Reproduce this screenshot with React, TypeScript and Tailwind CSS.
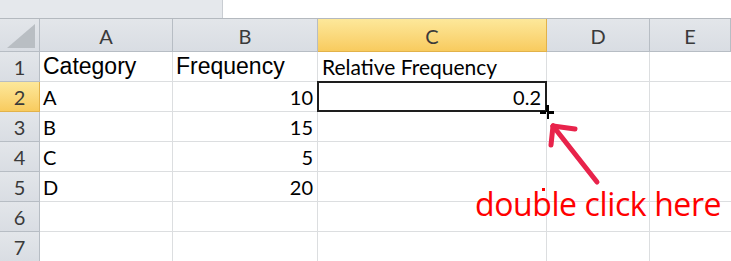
const cols = ["A", "B", "C", "D", "E"];
const widths = "grid-cols-[40px_133px_145px_229px_103px_81px]";

type Row = { n: number; a?: string; b?: string; c?: string };

const rows: Row[] = [
  { n: 1, a: "Category", b: "Frequency", c: "Relative Frequency" },
  { n: 2, a: "A", b: "10", c: "0.2" },
  { n: 3, a: "B", b: "15" },
  { n: 4, a: "C", b: "5" },
  { n: 5, a: "D", b: "20" },
  { n: 6 },
  { n: 7 },
];

const headGray = "bg-gradient-to-b from-[#e3e6ea] to-[#d9dde3] border-[#b7bdc4]";
const headOrange = "bg-gradient-to-b from-[#fde89a] to-[#f8cb5e] border-[#e2b24a]";

function ColHead({ label }: { label: string }) {
  return (
    <div
      className={`h-[33px] flex items-center justify-center border-r border-b text-[20px] text-[#3a3a3a] ${
        label === "C" ? headOrange : headGray
      }`}
    >
      <span className="pt-[2px]">{label}</span>
    </div>
  );
}

function RowCells({ row }: { row: Row }) {
  const first = row.n === 1;
  const selected = row.n === 2;
  return (
    <>
      <div
        className={`h-[30px] flex items-center justify-center border-r border-b text-[20px] text-[#3a3a3a] ${
          selected ? headOrange : headGray
        }`}
      >
        {row.n}
      </div>
      <div
        className={`h-[30px] flex items-center pl-[3px] border-r border-b border-[#dcdee0] text-black ${
          first ? "text-[23px] font-['Liberation_Sans',sans-serif]" : "text-[20px]"
        }`}
      >
        {row.a}
      </div>
      <div
        className={`h-[30px] flex items-center border-r border-b border-[#dcdee0] text-black ${
          first
            ? "pl-[3px] text-[23px] font-['Liberation_Sans',sans-serif]"
            : "justify-end pr-[4px] text-[20px]"
        }`}
      >
        {row.b}
      </div>
      <div
        className={`h-[30px] relative flex items-center border-r border-b border-[#dcdee0] text-black ${
          first ? "pl-[4px] text-[21px]" : "justify-end pr-[5px] text-[20px]"
        }`}
      >
        {row.c}
        {selected && (
          <>
            <div className="absolute -left-[1px] -top-[1px] -right-[1px] -bottom-[1px] border-2 border-[#1e1e1e]"></div>
            <div className="absolute -right-[8px] -bottom-[8px] w-[14px] h-[14px] flex items-center justify-center">
              <div className="w-[3px] h-[14px] bg-black"></div>
              <div className="absolute w-[14px] h-[3px] bg-black"></div>
            </div>
          </>
        )}
      </div>
      <div className="h-[30px] border-r border-b border-[#dcdee0]"></div>
      <div className="h-[30px] border-b border-[#dcdee0]"></div>
    </>
  );
}

function App() {
  return (
    <div className="w-[731px] h-[261px] overflow-hidden bg-white relative font-['Lato','Liberation_Sans',sans-serif]">
      <div className="h-[19px] border-b border-[#b4b9bf] flex">
        <div className="w-[223px] h-full bg-[#e5e8ec] border-r border-[#c9cdd2]"></div>
      </div>

      <div className={`grid ${widths}`}>
        <div className={`h-[33px] border-r border-b relative overflow-hidden ${headGray}`}>
          <div className="absolute right-[4px] bottom-[3px] w-0 h-0 border-l-[28px] border-l-transparent border-b-[24px] border-b-[#b9bec3]"></div>
        </div>
        {cols.map((c) => (
          <ColHead key={c} label={c} />
        ))}

        {rows.map((r) => (
          <RowCells key={r.n} row={r} />
        ))}
      </div>

      {/* annotation drawn over the sheet */}
      <svg className="absolute left-0 top-0" width="731" height="261">
        <g stroke="#e8234b" strokeWidth="5" strokeLinecap="round" fill="none">
          <line x1="597" y1="182" x2="553" y2="126" />
          <line x1="553" y1="126" x2="575" y2="129" />
          <line x1="553" y1="126" x2="551" y2="145" />
        </g>
        <rect x="542" y="188" width="3" height="3" fill="#ff0000" />
      </svg>
      <div className="absolute left-[475px] top-[184px] text-[32px] leading-[40px] text-[#ff0000] font-['Open_Sans','Liberation_Sans',sans-serif] tracking-[-0.4px]">
        double click here
      </div>
    </div>
  );
}

export default App;
